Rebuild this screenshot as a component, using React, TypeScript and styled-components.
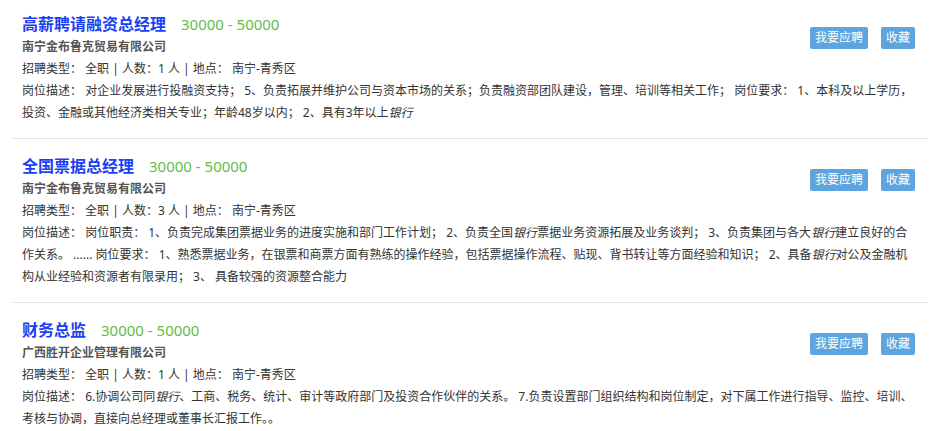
import React from 'react';
import styled, { createGlobalStyle } from 'styled-components';

const GlobalStyle = createGlobalStyle`
  html, body {
    margin: 0;
    padding: 0;
    background: #ffffff;
  }
  body {
    font-family: "Noto Sans", "Noto Sans CJK SC", sans-serif;
    color: #333;
  }
`;

// Styled components
const JobList = styled.ul`
  list-style: none;
  margin: 0;
  padding: 0 12px;
`;

const JobItem = styled.li`
  padding: 15px 12px 14px 10px;
  border-bottom: 1px dotted #c8c8c8;

  &:first-child {
    padding-top: 12px;
  }

  &:last-child {
    border-bottom: none;
  }

  &::after {
    content: '';
    display: block;
    clear: both;
  }
`;

const Actions = styled.div`
  float: right;
  display: flex;
  gap: 13px;
  margin-top: 15px;
`;

const ActionButton = styled.button`
  height: 22px;
  padding: 0 5px;
  border: none;
  border-radius: 2px;
  background: #5ea5e0;
  color: #ffffff;
  font-family: inherit;
  font-size: 12px;
  line-height: 22px;
  cursor: pointer;
`;

const TitleRow = styled.div`
  display: flex;
  align-items: baseline;
  height: 24px;
  line-height: 24px;
`;

const JobTitle = styled.a`
  font-size: 16px;
  font-weight: 700;
  color: #1b3ff2;
  text-decoration: none;
`;

const Salary = styled.span`
  margin-left: 15px;
  font-size: 15px;
  color: #62bd48;
`;

const Company = styled.div`
  font-size: 12px;
  font-weight: 700;
  color: #555;
  line-height: 22px;
`;

const InfoLine = styled.div`
  font-size: 12px;
  line-height: 22px;
  color: #333;
`;

const Highlight = styled.em`
  font-style: italic;
`;

type Job = {
  title: string;
  salary: string;
  company: string;
  count: number;
  place: string;
  desc: React.ReactNode;
};

const jobs: Job[] = [
  {
    title: '高薪聘请融资总经理',
    salary: '30000 - 50000',
    company: '南宁金布鲁克贸易有限公司',
    count: 1,
    place: '南宁-青秀区',
    desc: (
      <>
        对企业发展进行投融资支持； 5、负责拓展并维护公司与资本市场的关系；负责融资部团队建设，管理、培训等相关工作； 岗位要求： 1、本科及以上学历，投资、金融或其他经济类相关专业；年龄48岁以内； 2、具有3年以上<Highlight>银行</Highlight>
      </>
    ),
  },
  {
    title: '全国票据总经理',
    salary: '30000 - 50000',
    company: '南宁金布鲁克贸易有限公司',
    count: 3,
    place: '南宁-青秀区',
    desc: (
      <>
        岗位职责： 1、负责完成集团票据业务的进度实施和部门工作计划； 2、负责全国<Highlight>银行</Highlight>票据业务资源拓展及业务谈判； 3、负责集团与各大<Highlight>银行</Highlight>建立良好的合作关系。 ...... 岗位要求： 1、熟悉票据业务，在银票和商票方面有熟练的操作经验，包括票据操作流程、贴现、背书转让等方面经验和知识； 2、具备<Highlight>银行</Highlight>对公及金融机构从业经验和资源者有限录用； 3、 具备较强的资源整合能力
      </>
    ),
  },
  {
    title: '财务总监',
    salary: '30000 - 50000',
    company: '广西胜开企业管理有限公司',
    count: 1,
    place: '南宁-青秀区',
    desc: (
      <>
        6.协调公司同<Highlight>银行</Highlight>、工商、税务、统计、审计等政府部门及投资合作伙伴的关系。 7.负责设置部门组织结构和岗位制定，对下属工作进行指导、监控、培训、考核与协调，直接向总经理或董事长汇报工作。。
      </>
    ),
  },
];

// Main component
const App: React.FC = () => {
  return (
    <>
      <GlobalStyle />
      <JobList>
        {jobs.map((job, i) => (
          <JobItem key={i}>
            <Actions>
              <ActionButton>我要应聘</ActionButton>
              <ActionButton>收藏</ActionButton>
            </Actions>
            <TitleRow>
              <JobTitle href="#">{job.title}</JobTitle>
              <Salary>{job.salary}</Salary>
            </TitleRow>
            <Company>{job.company}</Company>
            <InfoLine>
              招聘类型： 全职 | 人数：{job.count} 人 | 地点： {job.place}
            </InfoLine>
            <InfoLine>岗位描述： {job.desc}</InfoLine>
          </JobItem>
        ))}
      </JobList>
    </>
  );
};

export default App;
